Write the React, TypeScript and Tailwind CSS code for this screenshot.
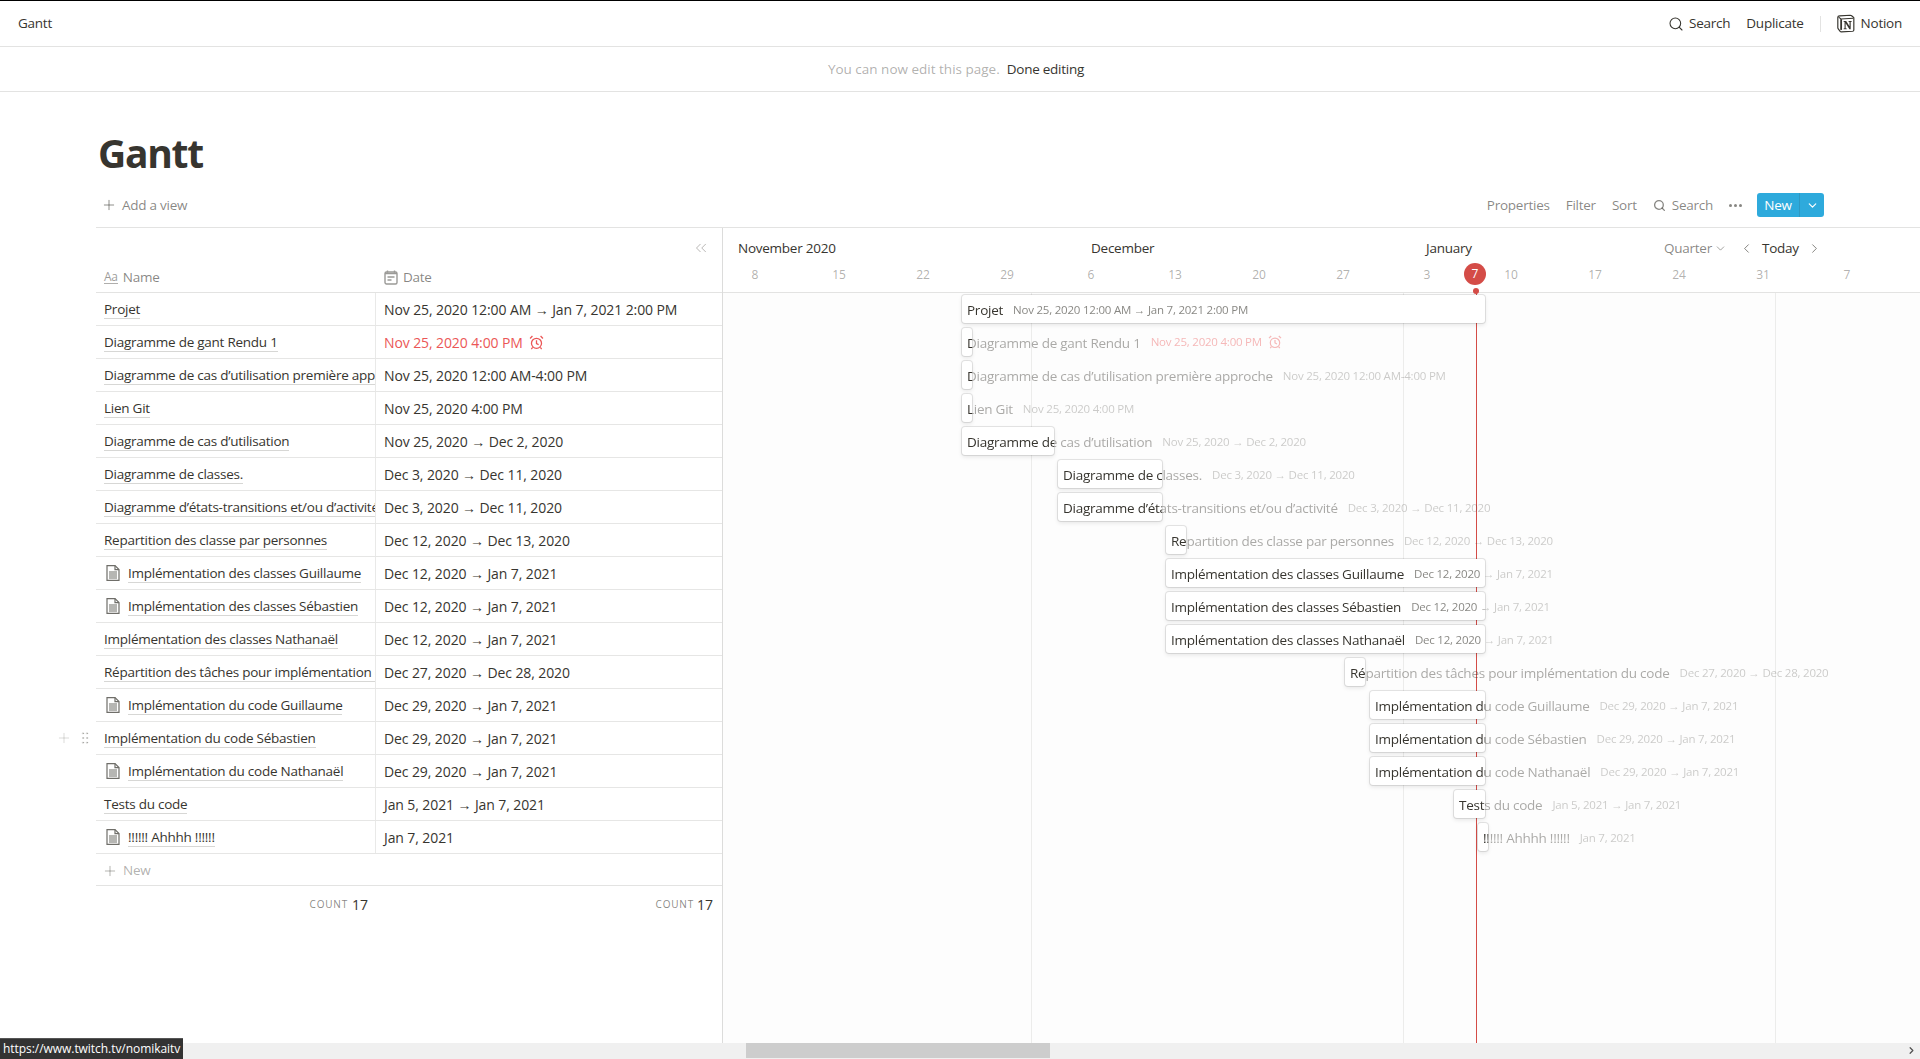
import React from 'react';
import { ChevronDown, ChevronLeft, ChevronRight, ChevronsLeft, GripVertical, Plus, Search } from 'lucide-react';

const font = 'font-["Open_Sans","Noto_Sans",sans-serif]';
// Open Sans runs wider than the original face, so labels get pulled in a bit
const label = 'text-[13.5px] tracking-[-0.25px]';

type Task = {
  name: string;
  date: string;
  doc?: boolean;
  left: number;
  width: number;
  overdue?: boolean;
};

const tasks: Task[] = [
  { name: 'Projet', date: 'Nov 25, 2020 12:00 AM → Jan 7, 2021 2:00 PM', left: 239, width: 523 },
  { name: 'Diagramme de gant Rendu 1', date: 'Nov 25, 2020 4:00 PM', left: 239, width: 10, overdue: true },
  { name: 'Diagramme de cas d’utilisation première approche', date: 'Nov 25, 2020 12:00 AM-4:00 PM', left: 239, width: 10 },
  { name: 'Lien Git', date: 'Nov 25, 2020 4:00 PM', left: 239, width: 10 },
  { name: 'Diagramme de cas d’utilisation', date: 'Nov 25, 2020 → Dec 2, 2020', left: 239, width: 92 },
  { name: 'Diagramme de classes.', date: 'Dec 3, 2020 → Dec 11, 2020', left: 335, width: 104 },
  { name: 'Diagramme d’états-transitions et/ou d’activité', date: 'Dec 3, 2020 → Dec 11, 2020', left: 335, width: 104 },
  { name: 'Repartition des classe par personnes', date: 'Dec 12, 2020 → Dec 13, 2020', left: 443, width: 20 },
  { name: 'Implémentation des classes Guillaume', date: 'Dec 12, 2020 → Jan 7, 2021', doc: true, left: 443, width: 319 },
  { name: 'Implémentation des classes Sébastien', date: 'Dec 12, 2020 → Jan 7, 2021', doc: true, left: 443, width: 319 },
  { name: 'Implémentation des classes Nathanaël', date: 'Dec 12, 2020 → Jan 7, 2021', left: 443, width: 319 },
  { name: 'Répartition des tâches pour implémentation du code', date: 'Dec 27, 2020 → Dec 28, 2020', left: 622, width: 20 },
  { name: 'Implémentation du code Guillaume', date: 'Dec 29, 2020 → Jan 7, 2021', doc: true, left: 647, width: 115 },
  { name: 'Implémentation du code Sébastien', date: 'Dec 29, 2020 → Jan 7, 2021', left: 647, width: 115 },
  { name: 'Implémentation du code Nathanaël', date: 'Dec 29, 2020 → Jan 7, 2021', doc: true, left: 647, width: 115 },
  { name: 'Tests du code', date: 'Jan 5, 2021 → Jan 7, 2021', left: 731, width: 31 },
  { name: '!!!!!! Ahhhh !!!!!!', date: 'Jan 7, 2021', doc: true, left: 755, width: 10 },
];

const ticks = [
  { label: '8', x: 32 },
  { label: '15', x: 116 },
  { label: '22', x: 200 },
  { label: '29', x: 284 },
  { label: '6', x: 368 },
  { label: '13', x: 452 },
  { label: '20', x: 536 },
  { label: '27', x: 620 },
  { label: '3', x: 704 },
  { label: '10', x: 788 },
  { label: '17', x: 872 },
  { label: '24', x: 956 },
  { label: '31', x: 1040 },
  { label: '7', x: 1124 },
];

const DocIcon = () => (
  <svg viewBox="0 0 14 16" className="w-[14px] h-[16px] shrink-0 ml-[2px] mr-[8px]" fill="none" stroke="#6f6e69" strokeWidth="1.2">
    <path d="M1 .6h8l4 4v10.8H1z" fill="#fff" />
    <path d="M9 .6v4h4" />
    <path d="M3 7h8M3 9h8M3 11h8M3 13h8" />
  </svg>
);

const AlarmIcon = ({ className }: { className: string }) => (
  <svg viewBox="0 0 14 14" className={className} fill="none" stroke="currentColor" strokeWidth="1.2">
    <circle cx="7" cy="7.8" r="4.7" />
    <path d="M7 5v3l2 1M1 3.2 3.2 1M13 3.2 10.8 1M3.4 11.6l-1.2 1.5M10.6 11.6l1.2 1.5" />
  </svg>
);

const NotionLogo = () => (
  <svg viewBox="0 0 20 20" className="w-[18px] h-[19px]">
    <path d="M3 1.6 14.8.8c.5 0 .8.1 1.1.4l2.4 1.8c.3.2.4.4.4.8v13.4c0 .8-.3 1.3-1.3 1.4l-12.6.7c-.6 0-1-.1-1.3-.5L1.4 15.9c-.3-.4-.5-.7-.5-1.2V3c0-.7.4-1.3 2.1-1.4z" fill="#fff" stroke="#37352f" strokeWidth="1.3" />
    <path d="M1.8 2.9 4.4 5l13.6-.8" fill="none" stroke="#37352f" strokeWidth="1.3" />
    <path d="M4.6 5.2v11.9" fill="none" stroke="#37352f" strokeWidth="2" />
    <path d="M7.4 7.2v1l1 .2v7l-1 .2v.8h3.4v-.8l-1.2-.2V9.6l4.2 6.8h1.4V8.4l1-.2v-1h-3.3v1l1 .2v4.7L10.2 7.2z" fill="#37352f" />
  </svg>
);

const Bar = ({ task }: { task: Task }) => {
  // everything past the end of the bar is faded out, the label just runs over
  const fade = `linear-gradient(to right, #000 ${task.width - 5}px, rgba(0,0,0,0.42) ${task.width - 5}px)`;
  return (
    <div className="h-[33px] pt-[2px]">
      <div
        className="relative h-[28px] bg-white rounded-[3px] shadow-[0_0_0_1px_rgba(15,15,15,0.1),0_2px_4px_rgba(15,15,15,0.1)]"
        style={{ marginLeft: task.left, width: task.width }}
      >
        <div
          className="absolute left-[5px] top-[1px] h-[28px] flex items-center whitespace-nowrap"
          style={{ maskImage: fade, WebkitMaskImage: fade }}
        >
          <span className={`${label} text-[#37352f]`}>{task.name}</span>
          {task.overdue ? (
            <span className="ml-[10px] flex items-center gap-[6px] text-[11.5px] tracking-[-0.22px] text-[#eb5757] -mt-[2px]">
              {task.date}
              <AlarmIcon className="w-[14px] h-[14px]" />
            </span>
          ) : (
            <span className="ml-[10px] text-[11.5px] tracking-[-0.22px] text-[#37352f]/60">{task.date}</span>
          )}
        </div>
      </div>
    </div>
  );
};

const Row = ({ task }: { task: Task }) => (
  <div className="flex h-[33px] border-b border-[#e6e6e5] text-[#37352f]">
    <div className={`${label} w-[280px] shrink-0 flex items-center pl-[8px] border-r border-[#e9e9e8] overflow-hidden whitespace-nowrap`}>
      {task.doc && <DocIcon />}
      <span className="border-b border-[#37352f]/20 leading-[18px]">{task.name}</span>
    </div>
    <div className="flex-1 flex items-center pl-[8px] text-[14px] tracking-[-0.1px] whitespace-nowrap overflow-hidden">
      {task.overdue ? (
        <span className="flex items-center gap-[6px] text-[#eb5757]">
          {task.date}
          <AlarmIcon className="w-[15px] h-[15px]" />
        </span>
      ) : (
        task.date
      )}
    </div>
  </div>
);

export default function App() {
  return (
    <div className={`${font} h-screen overflow-hidden bg-white flex flex-col border-t border-black text-[#37352f] relative`}>
      <header className={`${label} h-[46px] shrink-0 flex items-center justify-between px-[18px] border-b border-[#e3e3e2]`}>
        <span>Gantt</span>
        <div className="flex items-center">
          <Search size={16} strokeWidth={1.6} className="mr-[5px]" />
          <span className="mr-[16px]">Search</span>
          <span className="mr-[16px]">Duplicate</span>
          <span className="w-px h-[16px] bg-[#e3e3e2] mr-[16px]" />
          <span className="mr-[6px] flex"><NotionLogo /></span>
          <span>Notion</span>
        </div>
      </header>

      <div className={`${label} h-[45px] shrink-0 flex items-center justify-center pr-[8px] border-b border-[#e3e3e2]`}>
        <span className="text-[#37352f]/40 tracking-normal mr-[7px]">You can now edit this page.</span>
        <span>Done editing</span>
      </div>

      <h1 className="h-[90px] shrink-0 pl-[98px] pt-[35px] text-[39px] leading-[52px] tracking-[-1.3px] font-bold">Gantt</h1>

      <div className={`${label} h-[45px] shrink-0 ml-[96px] pt-[1px] flex items-center justify-between text-[#37352f]/60`}>
        <div className="flex items-center pl-[5px]">
          <Plus size={16} strokeWidth={1.4} className="mr-[5px]" />
          <span>Add a view</span>
        </div>
        <div className="flex items-center pr-[96px]">
          <span className="mr-[16px]">Properties</span>
          <span className="mr-[16px]">Filter</span>
          <span className="mr-[16px]">Sort</span>
          <Search size={13} strokeWidth={2.4} className="mr-[6px]" />
          <span className="mr-[16px]">Search</span>
          <span className="mr-[15px] flex gap-[2px]">
            <i className="w-[3px] h-[3px] rounded-full bg-[#37352f]/60" />
            <i className="w-[3px] h-[3px] rounded-full bg-[#37352f]/60" />
            <i className="w-[3px] h-[3px] rounded-full bg-[#37352f]/60" />
          </span>
          <div className="flex h-[24px] w-[67px] rounded-[3px] bg-[#2eaadc] text-white">
            <span className="w-[43px] flex items-center justify-center border-r border-[#37352f]/15">New</span>
            <span className="flex-1 flex items-center justify-center"><ChevronDown size={13} strokeWidth={2.2} /></span>
          </div>
        </div>
      </div>

      <div className="flex-1 min-h-0 ml-[96px] flex border-t border-[#e3e3e2]">
        <div className="w-[627px] shrink-0 border-r border-[#dcdcdb] flex flex-col">
          <div className={`${label} h-[65px] shrink-0 flex flex-col border-b border-[#e3e3e2] text-[#37352f]/60`}>
            <div className="h-[29px] flex items-end justify-end pr-[12px]">
              <ChevronsLeft size={18} strokeWidth={1.2} className="text-[#37352f]/40" />
            </div>
            <div className="flex-1 flex items-center pt-[5px]">
              <div className="w-[280px] flex items-center pl-[8px]">
                <span className="mr-[5px] text-[12px] leading-[13px] border-b border-[#37352f]/40 text-[#37352f]/50">Aa</span>
                Name
              </div>
              <div className="flex items-center pl-[8px]">
                <svg viewBox="0 0 14 15" className="w-[14px] h-[15px] mr-[5px]" fill="none" stroke="#9b9a97" strokeWidth="1.4">
                  <rect x="1" y="2" width="12" height="12" rx="1.5" />
                  <path d="M3.5 .5v2M10.5 .5v2M1 3.5h12M3.5 7h7M3.5 10h4" />
                </svg>
                Date
              </div>
            </div>
          </div>

          {tasks.map((t) => (
            <Row key={t.name} task={t} />
          ))}

          <div className={`${label} h-[32px] shrink-0 flex items-center pl-[6px] pt-[2px] border-b border-[#e3e3e2] text-[#37352f]/40`}>
            <Plus size={16} strokeWidth={1.4} className="mr-[5px]" />
            New
          </div>
          <div className="h-[34px] shrink-0 flex items-center pt-[3px] text-[14px]">
            <div className="w-[280px] flex items-center justify-end pr-[8px]">
              <span className="text-[10px] tracking-[0.8px] text-[#37352f]/60 mr-[4px]">COUNT</span>17
            </div>
            <div className="flex-1 flex items-center justify-end pr-[9px]">
              <span className="text-[10px] tracking-[0.8px] text-[#37352f]/60 mr-[3px]">COUNT</span>17
            </div>
          </div>
        </div>

        <div className="flex-1 min-w-0 flex flex-col relative">
          <div className="h-[65px] shrink-0 relative border-b border-[#e3e3e2]">
            <div className={`${label} absolute left-[15px] top-[10px]`}>November 2020</div>
            <div className={`${label} absolute left-[368px] top-[10px]`}>December</div>
            <div className={`${label} absolute left-[703px] top-[10px]`}>January</div>
            {ticks.map((t) => (
              <span
                key={t.x}
                className="absolute top-[38px] w-[30px] -ml-[15px] text-center text-[12px] text-[#37352f]/40"
                style={{ left: t.x }}
              >
                {t.label}
              </span>
            ))}
            <span className="absolute left-[741px] top-[35px] w-[22px] h-[22px] rounded-full bg-[#d44c47] text-white text-[12px] flex items-center justify-center">7</span>
            <span className="absolute left-[750px] top-[60px] w-[6px] h-[6px] rounded-full bg-[#d44c47] z-10" />
            <div className={`${label} absolute left-[941px] top-[10px] flex items-center text-[#37352f]/60`}>
              Quarter
              <ChevronDown size={13} strokeWidth={1.4} className="ml-[2px] mr-[12px]" />
              <ChevronLeft size={15} strokeWidth={1.6} className="mr-[8px]" />
              <span className="text-[#37352f]">Today</span>
              <ChevronRight size={15} strokeWidth={1.6} className="ml-[8px]" />
            </div>
          </div>

          <div className="flex-1 relative bg-[#fdfdfd]">
            <div className="absolute top-0 bottom-[16px] left-[308px] w-px bg-[#ececeb]" />
            <div className="absolute top-0 bottom-[16px] left-[680px] w-px bg-[#ececeb]" />
            <div className="absolute top-0 bottom-[16px] left-[1052px] w-px bg-[#ececeb]" />
            <div className="absolute top-0 bottom-[16px] left-[753px] w-px bg-[#d44c47]" />
            <div className="relative">
              {tasks.map((t) => (
                <Bar key={t.name} task={t} />
              ))}
            </div>
          </div>
        </div>
      </div>

      {/* row hover handles */}
      <div className="absolute left-[56px] top-[729px] flex items-center gap-[5px] text-[#37352f]/20">
        <Plus size={16} strokeWidth={1.4} />
        <GripVertical size={16} strokeWidth={1.5} />
      </div>

      {/* browser scrollbar + link preview */}
      <div className="absolute left-0 right-0 bottom-0 h-[16px] bg-[#f0f0f0]">
        <div className="absolute left-[746px] top-0 w-[304px] h-[15px] bg-[#cdcdcd]" />
        <ChevronRight size={11} strokeWidth={2.6} className="absolute right-[3px] top-[2px] text-[#505050]" />
      </div>
      <div className="absolute left-0 bottom-0 w-[183px] h-[21px] bg-[#333] border-t border-[#555] text-white text-[12px] tracking-[-0.05px] leading-[20px] pl-[3px] whitespace-nowrap overflow-hidden">
        https://www.twitch.tv/nomikaitv
      </div>
    </div>
  );
}
